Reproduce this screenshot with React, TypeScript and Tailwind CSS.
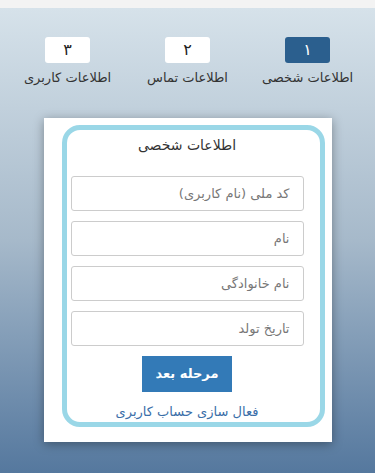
import React from "react";

const font = { fontFamily: '"DejaVu Sans", "Noto Sans", sans-serif' };

function Step({ n, label, active }: { n: string; label: string; active?: boolean }) {
  return (
    <div className="flex flex-col items-center">
      <div
        className={
          active
            ? "w-[45px] h-[26px] rounded-[3px] bg-[#2b5f8e] text-white flex items-center justify-center text-[16px] leading-none"
            : "w-[45px] h-[26px] rounded-[3px] bg-white text-[#222] flex items-center justify-center text-[16px] leading-none"
        }
      >
        {n}
      </div>
      <div className="mt-[6px] text-[13px] leading-[18px] text-[#333]">{label}</div>
    </div>
  );
}

function Field({ ph }: { ph: string }) {
  return (
    <input
      dir="rtl"
      placeholder={ph}
      className="block w-[233px] h-[35px] border border-[#cccccc] rounded-[3px] bg-white pr-[13px] pl-2 text-[13px] text-[#555] placeholder:text-[#777] outline-none"
      style={font}
    />
  );
}

export default function App() {
  return (
    <div dir="rtl" className="w-full h-[473px] overflow-hidden flex flex-col" style={font}>
      <div className="h-[8px] bg-[#f3f3f3] shrink-0" />
      <div className="flex-1 bg-gradient-to-b from-[#d6e2ea] via-[#a6b9ca] to-[#55789e]">
        <div className="pt-[29px] grid grid-cols-3 w-[360px] mx-auto">
          <Step n="۱" label="اطلاعات شخصی" active />
          <Step n="۲" label="اطلاعات تماس" />
          <Step n="۳" label="اطلاعات کاربری" />
        </div>
        <div dir="ltr" className="mt-[31px] mx-auto w-[288px] bg-white shadow-[0_2px_10px_rgba(0,0,0,0.35)] pt-[7px] pb-[15px] pl-[18px] pr-[7px]">
          <div className="border-[5px] border-[#9ad7e7] rounded-[18px]">
            <div dir="rtl" className="pl-[4px] pr-[16px] flex flex-col items-center">
              <div className="mt-[5px] text-[14px] leading-[20px] text-[#333]">اطلاعات شخصی</div>
              <div className="mt-[21px] flex flex-col gap-[10px]">
                <Field ph="کد ملی (نام کاربری)" />
                <Field ph="نام" />
                <Field ph="نام خانوادگی" />
                <Field ph="تاریخ تولد" />
              </div>
              <button className="mt-[10px] w-[90px] h-[36px] bg-[#337ab7] text-white text-[13px] font-bold" style={font}>
                مرحله بعد
              </button>
              <a className="mt-[10px] text-[13px] leading-[20px] text-[#3a6ea8]">فعال سازی حساب کاربری</a>
            </div>
          </div>
        </div>
      </div>
    </div>
  );
}
